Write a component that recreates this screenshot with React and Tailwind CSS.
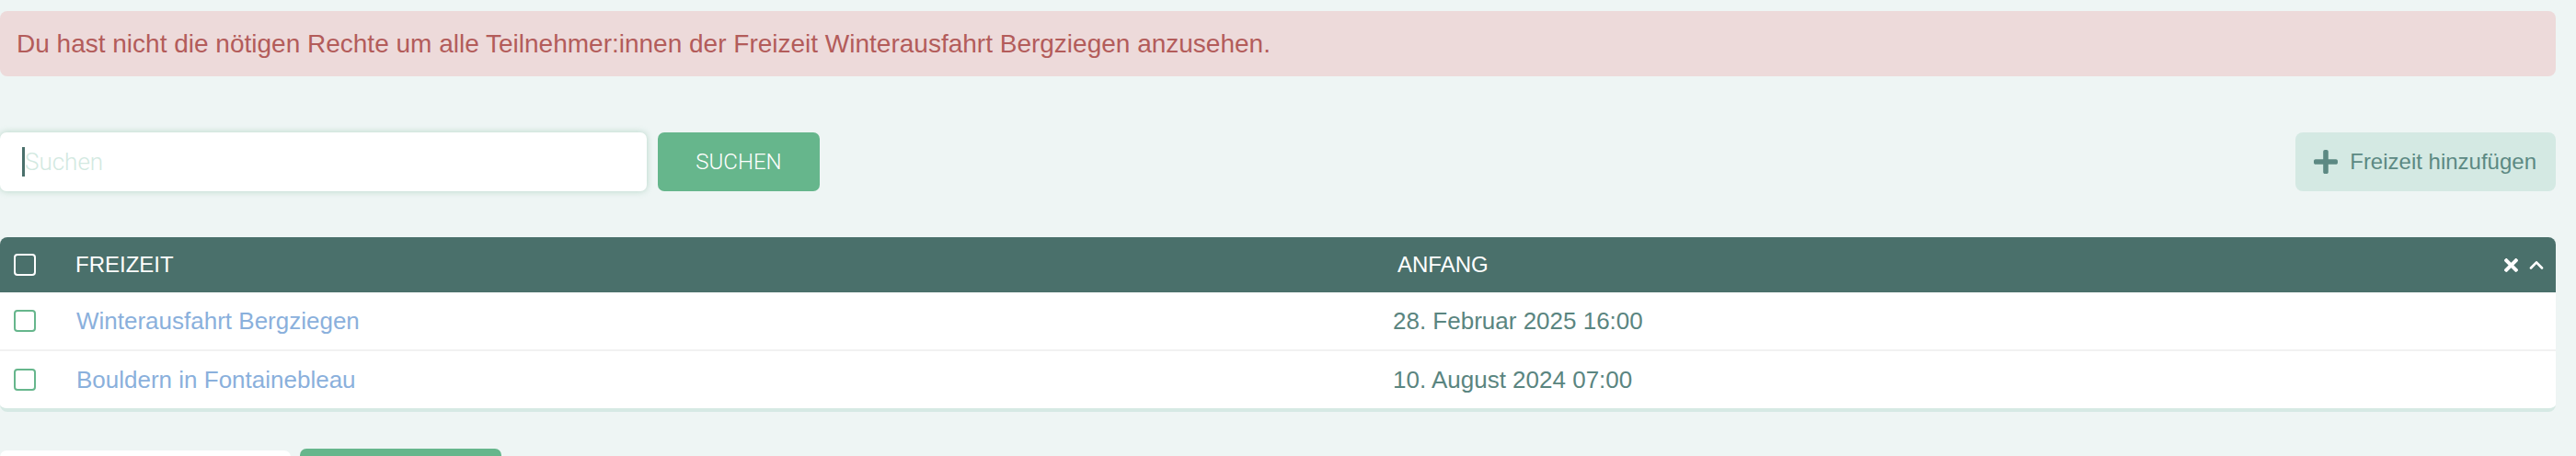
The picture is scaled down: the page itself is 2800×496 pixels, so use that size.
import React from "react";

function PlusIcon() {
  return (
    <svg width="26" height="26" viewBox="0 32 448 448" fill="currentColor" aria-hidden="true">
      <path d="M416 208H272V64c0-17.67-14.33-32-32-32h-32c-17.67 0-32 14.33-32 32v144H32c-17.67 0-32 14.33-32 32v32c0 17.67 14.33 32 32 32h144v144c0 17.67 14.33 32 32 32h32c17.67 0 32-14.330 32-32V304h144c17.67 0 32-14.33 32-32v-32c0-17.670-14.33-32-32-32z" />
    </svg>
  );
}

function TimesIcon() {
  return (
    <svg width="15" height="15" viewBox="0 80 352 352" fill="currentColor" aria-hidden="true">
      <path d="M242.72 256l100.07-100.07c12.28-12.28 12.28-32.19 0-44.48l-22.24-22.24c-12.28-12.28-32.19-12.28-44.48 0L176 189.28 75.930 89.21c-12.28-12.28-32.19-12.28-44.48 0L9.21 111.45c-12.28 12.28-12.28 32.19 0 44.48L109.28 256 9.21 356.07c-12.28 12.28-12.28 32.19 0 44.48l22.24 22.24c12.28 12.28 32.2 12.28 44.48 0L176 322.72l100.07 100.07c12.28 12.28 32.2 12.28 44.48 0l22.24-22.24c12.28-12.28 12.28-32.19 0-44.48L242.72 256z" />
    </svg>
  );
}

function ChevronUp() {
  return (
    <svg width="16" height="10" viewBox="0 0 16 10" fill="none" stroke="currentColor" strokeWidth="2.6" strokeLinecap="round" strokeLinejoin="round" aria-hidden="true">
      <polyline points="2,8.5 8,2.3 14,8.5" />
    </svg>
  );
}

const rows = [
  { name: "Winterausfahrt Bergziegen", date: "28. Februar 2025 16:00" },
  { name: "Bouldern in Fontainebleau", date: "10. August 2024 07:00" },
];

export default function App() {
  return (
    <div className="min-h-screen bg-[#eef5f4] pr-[22px] pt-[12px] font-['Liberation_Sans',Arial,sans-serif] overflow-hidden">
      <div className="h-[71px] flex items-center pl-[18px] bg-[#eddada] text-[#b35c5a] text-[28px] rounded-[8px]">
        Du hast nicht die nötigen Rechte um alle Teilnehmer:innen der Freizeit Winterausfahrt Bergziegen anzusehen.
      </div>

      <div className="mt-[61px] flex items-center justify-between h-[64px]">
        <div className="flex gap-[12px]">
          <div className="relative w-[703px] h-[64px] bg-white rounded-[7px] shadow-[0_0_7px_rgba(110,175,145,0.45)]">
            <input
              className="w-full h-full bg-transparent outline-none pl-[27px] text-[26px] font-light font-['Roboto',sans-serif] text-[#4a706b] placeholder:text-[#d2e9e1] caret-transparent"
              placeholder="Suchen"
            />
            <span className="absolute left-[24px] top-[16px] w-[3px] h-[32px] bg-[#4a706b]" />
          </div>
          <button className="w-[176px] h-[64px] bg-[#66b68c] text-white text-[24px] font-light font-['Roboto',sans-serif] rounded-[7px]">
            SUCHEN
          </button>
        </div>
        <button className="h-[64px] pl-[20px] pr-[21px] bg-[#d4e9e3] rounded-[8px] flex items-center gap-[13px] text-[#5c8983] text-[24px]">
          <PlusIcon />
          <span>Freizeit hinzufügen</span>
        </button>
      </div>

      <div className="mt-[50px] rounded-[8px] overflow-hidden border-b-4 border-[#d6e9e4] bg-white">
        <div className="h-[60px] bg-[#4a706b] flex items-center text-white text-[24px]">
          <div className="w-[82px] pl-[15px] flex items-center">
            <span className="block w-[24px] h-[24px] border-2 border-white rounded-[4px]" />
          </div>
          <div className="w-[1437px]">FREIZEIT</div>
          <div className="flex-1">ANFANG</div>
          <div className="flex items-center gap-[12px] pr-[13px]">
            <TimesIcon />
            <ChevronUp />
          </div>
        </div>
        {rows.map((r, i) => (
          <div
            key={r.name}
            className={
              i === 0
                ? "h-[64px] flex items-center text-[26px] border-b-2 border-[#f1f1f1]"
                : "h-[62px] flex items-center text-[26px]"
            }
          >
            <div className="w-[83px] pl-[15px] flex items-center">
              <span className="block w-[24px] h-[24px] border-2 border-[#66b68c] rounded-[4px]" />
            </div>
            <div className="w-[1431px]">
              <a href="#" className="text-[#8ab0dc]">{r.name}</a>
            </div>
            <div className="flex-1 text-[#5a8580]">{r.date}</div>
          </div>
        ))}
      </div>

      <div className="mt-[40px] flex items-start gap-[10px]">
        <div className="mt-[2px] w-[316px] h-[64px] bg-white rounded-[7px]" />
        <div className="w-[219px] h-[64px] bg-[#66b68c] rounded-[7px]" />
      </div>
    </div>
  );
}
